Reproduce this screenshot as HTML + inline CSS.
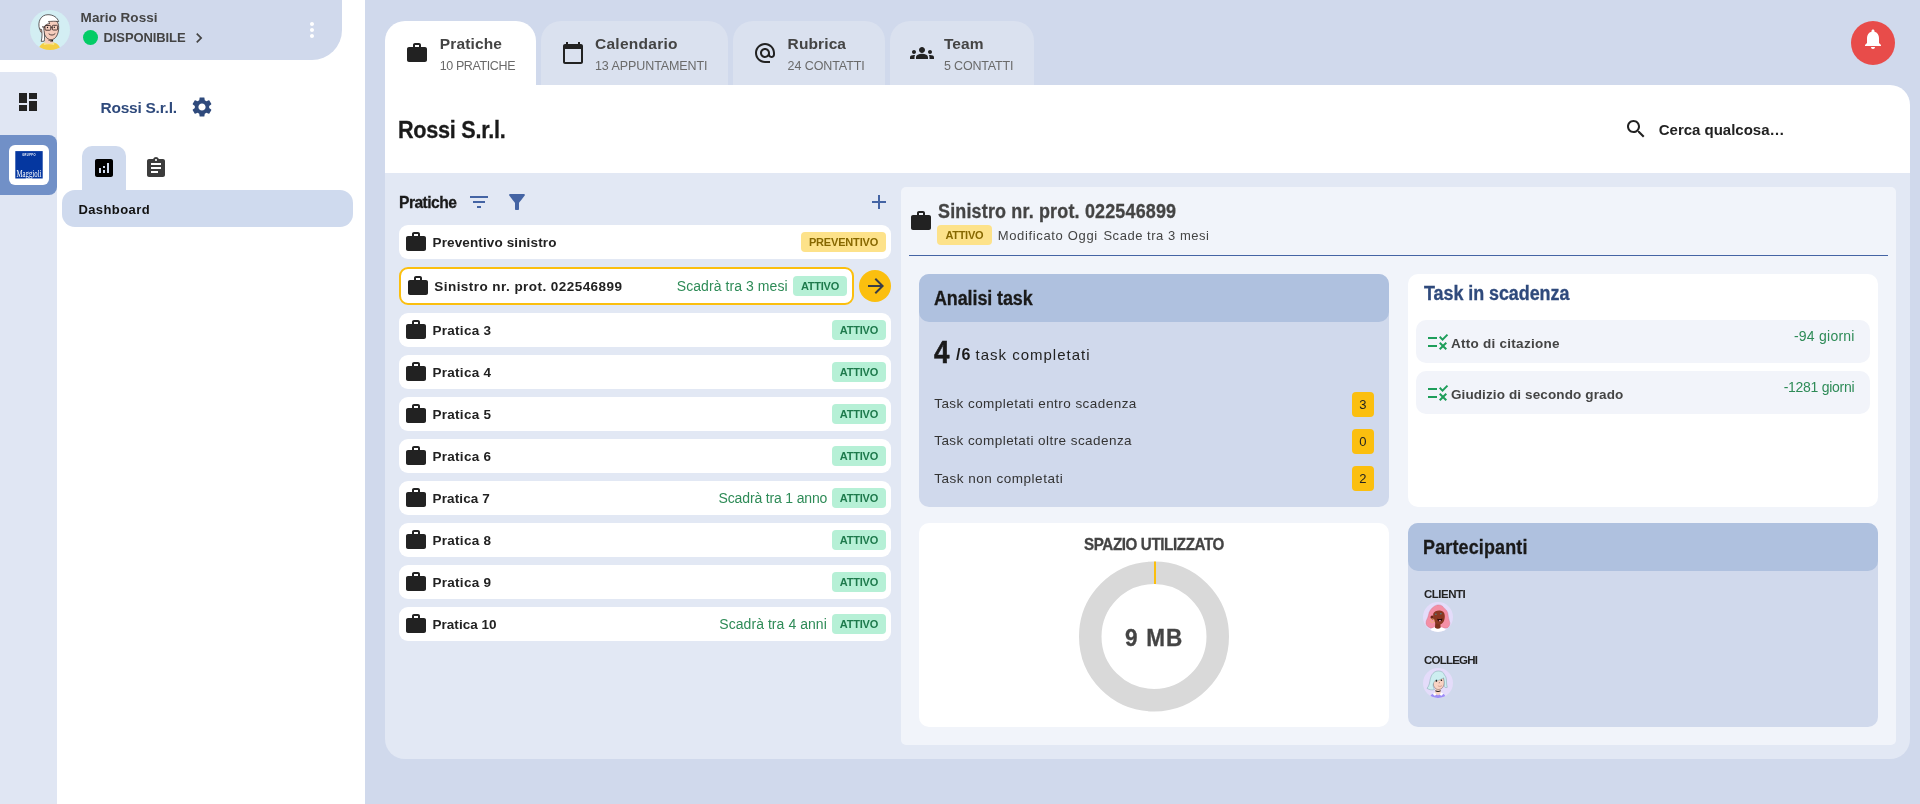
<!DOCTYPE html>
<html lang="it"><head><meta charset="utf-8"><title>Rossi S.r.l. - Pratiche</title>
<style>
html,body{margin:0;padding:0}
body{width:1920px;height:804px;overflow:hidden;background:#d0d9ec;font-family:"Liberation Sans", sans-serif;position:relative}
#app{will-change:transform;position:absolute;left:0;top:0;width:1920px;height:804px;overflow:hidden}
#app div,#app svg,#app .t{position:absolute;box-sizing:border-box}
#app .t{line-height:1;white-space:nowrap;margin:0;padding:0}
</style></head><body><div id="app">
<div style="left:0px;top:0px;width:365px;height:804px;background:#fff;border-radius:0;"></div>
<header>
<div style="left:0px;top:0px;width:342px;height:60px;background:#d0d9ec;border-radius:0 0 30px 0;"></div>
<svg style="left:30px;top:10px" width="40" height="40" viewBox="0 0 40 40"><defs><clipPath id="cm"><circle cx="20" cy="20" r="20"/></clipPath></defs><circle cx="20" cy="20" r="20" fill="#d3eef3"/><g clip-path="url(#cm)"><path d="M8.500 40c.5-4.500 4-7 6.500-7.400h8.500c3 .4 6.500 2.900 7 7.400z" fill="#f4cf45"/><path d="M13.500 33.200c3.500-1.200 7.500-1.200 11 0l-.5 1.800c-3.300-.9-6.700-.9-10 0z" fill="#f8e58a"/><path d="M15.200 27.500h7.600l.4 5.500c-2.800 1-5.600 1-8.400 0z" fill="#f6cdbd"/><path d="M17.500 29.800c2 1 4 .8 5.500-.3l.1 1.900c-1.900.4-3.800-.1-5.600-1.600z" fill="#1a1a1a"/><path d="M13.200 17c0-5 3.300-8 7.800-8s7.700 3 7.700 8.500c0 6.500-3 12.200-7.700 12.200S13.200 24 13.200 17z" fill="#f6cdbd" stroke="#2a2020" stroke-width=".7"/><ellipse cx="11.800" cy="20" rx="1.700" ry="2.300" fill="#f6cdbd" stroke="#2a2020" stroke-width=".6"/><path d="M11.200 31.400C12.300 27 12.200 23 11.600 19.500C10.500 19 9.600 19.300 9.600 19.300C7.200 11.500 11 4.700 18 4.700C23.500 4.700 27.500 7.700 28.700 11.700C25.200 10.800 21.400 11.500 18.500 11.500C18.800 12.300 19.300 13 20 13.500C17.500 13.800 15.200 14.800 14 17C13.600 19 14.200 21.500 14.400 24C14.600 27 14.600 29.500 14.200 31.200Z" fill="#fff" stroke="#2a2020" stroke-width=".7" stroke-linejoin="round"/><rect x="15" y="15.500" width="5.800" height="4.700" rx="1" fill="none" stroke="#3a2a2a" stroke-width=".9"/><rect x="22.300" y="15.300" width="5.300" height="4.700" rx="1" fill="none" stroke="#3a2a2a" stroke-width=".9"/><path d="M20.800 17.300h1.500M15 17.200l-3-.4" stroke="#3a2a2a" stroke-width=".9"/><circle cx="17.500" cy="17.500" r=".7" fill="#1a1a1a"/><circle cx="24.300" cy="17.300" r=".7" fill="#1a1a1a"/><path d="M19 24c1.800 1.600 4.400 1.500 6-.2" fill="none" stroke="#2a2020" stroke-width=".8" stroke-linecap="round"/></g></svg>
<span id="t0" class="t" style="left:80.6px;top:11.01px;font-size:13.5px;font-weight:700;color:#444;letter-spacing:0.037px;">Mario Rossi</span>
<div style="left:82.5px;top:29.5px;width:15.0px;height:15.0px;background:#03cc66;border-radius:50%;"></div>
<span id="t1" class="t" style="left:103.5px;top:30.90px;font-size:13px;font-weight:700;color:#444;letter-spacing:-0.098px;">DISPONIBILE</span>
<svg style="left:188.5px;top:28.0px;" width="20" height="20" viewBox="0 0 24 24"><path fill="#444" d="M10 6L8.59 7.41 13.17 12l-4.58 4.59L10 18l6-6z"/></svg>
<svg style="left:300.0px;top:18.0px;" width="24" height="24" viewBox="0 0 24 24"><path fill="#fff" d="M12 8c1.1 0 2-.9 2-2s-.9-2-2-2-2 .9-2 2 .9 2 2 2zm0 2c-1.1 0-2 .9-2 2s.9 2 2 2 2-.9 2-2-.9-2-2-2zm0 6c-1.1 0-2 .9-2 2s.9 2 2 2 2-.9 2-2-.9-2-2-2z"/></svg>
</header>
<nav>
<div style="left:0px;top:72px;width:57px;height:732px;background:#e0e6f3;border-radius:0 8px 0 0;"></div>
<svg style="left:16.0px;top:90.0px;" width="24" height="24" viewBox="0 0 24 24"><path fill="#222" d="M3 13h8V3H3v10zm0 8h8v-6H3v6zm10 0h8V11h-8v10zm0-18v6h8V3h-8z"/></svg>
<div style="left:0px;top:135px;width:57px;height:60px;background:#7190c7;border-radius:0 8px 8px 0;"></div>
<div style="left:9px;top:145px;width:40px;height:40px;background:#fff;border-radius:6px;"></div>
<svg style="left:15px;top:150.500px" width="28" height="28" viewBox="0 0 28 28"><rect x=".3" y=".1" width="27.400" height="27.400" fill="#0537a0"/><text x="14" y="4.600" font-size="2.600" font-weight="700" fill="#fff" text-anchor="middle" font-family="Liberation Sans, sans-serif" letter-spacing=".4">GRUPPO</text><text x="14" y="26.300" font-size="9.500" fill="#fff" text-anchor="middle" font-family="Liberation Serif, serif" textLength="25" lengthAdjust="spacingAndGlyphs">Maggioli</text></svg>
</nav>
<aside>
<span id="t2" class="t" style="left:100.6px;top:100.00px;font-size:15.5px;font-weight:700;color:#2f4a7c;letter-spacing:-0.261px;">Rossi S.r.l.</span>
<svg style="left:190.0px;top:95.0px;" width="24" height="24" viewBox="0 0 24 24"><path fill="#2f4a7c" d="M19.14 12.94c.04-.3.06-.61.06-.94 0-.32-.02-.64-.07-.94l2.03-1.58c.18-.14.23-.41.12-.61l-1.92-3.32c-.12-.22-.37-.29-.59-.22l-2.39.96c-.5-.38-1.03-.7-1.62-.94l-.36-2.54c-.04-.24-.24-.41-.48-.41h-3.84c-.24 0-.43.17-.47.41l-.36 2.54c-.59.24-1.13.57-1.62.94l-2.39-.96c-.22-.08-.47 0-.59.22L2.74 8.87c-.12.21-.08.47.12.61l2.03 1.58c-.05.3-.09.63-.09.94s.02.64.07.94l-2.03 1.58c-.18.14-.23.41-.12.61l1.92 3.32c.12.22.37.29.59.22l2.39-.96c.5.38 1.03.7 1.62.94l.36 2.54c.05.24.24.41.48.41h3.84c.24 0 .44-.17.47-.41l.36-2.54c.59-.24 1.13-.56 1.62-.94l2.39.96c.22.08.47 0 .59-.22l1.92-3.32c.12-.22.07-.47-.12-.61l-2.01-1.58zM12 15.6c-1.98 0-3.6-1.62-3.6-3.6s1.62-3.6 3.6-3.6 3.6 1.62 3.6 3.6-1.62 3.6-3.6 3.6z"/></svg>
<div style="left:82px;top:146px;width:44px;height:46px;background:#cfdaee;border-radius:10px 10px 0 0;"></div>
<div style="left:62px;top:190px;width:291px;height:37px;background:#cfdaee;border-radius:13px;"></div>
<svg style="left:92.0px;top:156.0px;" width="24" height="24" viewBox="0 0 24 24"><path fill="#000" d="M19 3H5c-1.1 0-2 .9-2 2v14c0 1.1.9 2 2 2h14c1.1 0 2-.9 2-2V5c0-1.1-.9-2-2-2zM9 17H7v-5h2v5zm4 0h-2v-3h2v3zm0-5h-2v-2h2v2zm4 5h-2V7h2v10z"/></svg>
<svg style="left:144.0px;top:156.0px;" width="24" height="24" viewBox="0 0 24 24"><path fill="#3c3c3c" d="M19 3h-4.18C14.4 1.84 13.3 1 12 1c-1.3 0-2.4.84-2.82 2H5c-1.1 0-2 .9-2 2v14c0 1.1.9 2 2 2h14c1.1 0 2-.9 2-2V5c0-1.1-.9-2-2-2zm-7 0c.55 0 1 .45 1 1s-.45 1-1 1-1-.45-1-1 .45-1 1-1zm2 14H7v-2h7v2zm3-4H7v-2h10v2zm0-4H7V7h10v2z"/></svg>
<span id="t3" class="t" style="left:78.4px;top:203.00px;font-size:13px;font-weight:700;color:#111;letter-spacing:0.412px;">Dashboard</span>
</aside>
<main>
<div style="left:385px;top:21px;width:151px;height:65px;background:#fff;border-radius:20px 20px 0 0;"></div>
<svg style="left:405.0px;top:41.0px;" width="24" height="24" viewBox="0 0 24 24"><path fill="#222" d="M20 6h-4V4c0-1.11-.89-2-2-2h-4c-1.11 0-2 .89-2 2v2H4c-1.11 0-1.99.89-1.99 2L2 19c0 1.11.89 2 2 2h16c1.11 0 2-.89 2-2V8c0-1.11-.89-2-2-2zm-6 0h-4V4h4v2z"/></svg>
<span id="t4" class="t" style="left:439.7px;top:36.00px;font-size:15.5px;font-weight:700;color:#444;letter-spacing:0.161px;">Pratiche</span>
<span id="t5" class="t" style="left:439.7px;top:60.21px;font-size:12.5px;font-weight:400;color:#6a6a6a;letter-spacing:-0.386px;">10 PRATICHE</span>
<div style="left:541px;top:21px;width:187px;height:65px;background:#dae1ef;border-radius:20px 20px 0 0;"></div>
<svg style="left:561.0px;top:41.0px;" width="24" height="24" viewBox="0 0 24 24"><path fill="#222" d="M20 3h-1V1h-2v2H7V1H5v2H4c-1.1 0-2 .9-2 2v16c0 1.1.9 2 2 2h16c1.1 0 2-.9 2-2V5c0-1.1-.9-2-2-2zm0 18H4V8h16v13z"/></svg>
<span id="t6" class="t" style="left:595px;top:36.00px;font-size:15.5px;font-weight:700;color:#444;letter-spacing:0.266px;">Calendario</span>
<span id="t7" class="t" style="left:595px;top:60.21px;font-size:12.5px;font-weight:400;color:#6a6a6a;letter-spacing:-0.078px;">13 APPUNTAMENTI</span>
<div style="left:733px;top:21px;width:152px;height:65px;background:#dae1ef;border-radius:20px 20px 0 0;"></div>
<svg style="left:753.0px;top:41.0px;" width="24" height="24" viewBox="0 0 24 24"><path fill="#222" d="M12 2C6.48 2 2 6.48 2 12s4.48 10 10 10h5v-2h-5c-4.34 0-8-3.66-8-8s3.66-8 8-8 8 3.66 8 8v1.43c0 .79-.71 1.57-1.5 1.57s-1.5-.78-1.5-1.57V12c0-2.76-2.24-5-5-5s-5 2.24-5 5 2.24 5 5 5c1.38 0 2.64-.56 3.54-1.47.65.89 1.77 1.47 2.96 1.47 1.97 0 3.5-1.6 3.5-3.57V12c0-5.52-4.48-10-10-10zm0 13c-1.66 0-3-1.34-3-3s1.34-3 3-3 3 1.34 3 3-1.34 3-3 3z"/></svg>
<span id="t8" class="t" style="left:787.6px;top:36.00px;font-size:15.5px;font-weight:700;color:#444;letter-spacing:0.114px;">Rubrica</span>
<span id="t9" class="t" style="left:787.6px;top:60.21px;font-size:12.5px;font-weight:400;color:#6a6a6a;letter-spacing:-0.092px;">24 CONTATTI</span>
<div style="left:890px;top:21px;width:144px;height:65px;background:#dae1ef;border-radius:20px 20px 0 0;"></div>
<svg style="left:910.0px;top:41.0px;" width="24" height="24" viewBox="0 0 24 24"><path fill="#222" d="M12 12.75c1.63 0 3.07.39 4.24.9 1.08.48 1.76 1.56 1.76 2.73V18H6v-1.61c0-1.18.68-2.26 1.76-2.73 1.17-.52 2.61-.91 4.24-.91zM4 13c1.1 0 2-.9 2-2s-.9-2-2-2-2 .9-2 2 .9 2 2 2zm1.13 1.1c-.37-.06-.74-.1-1.13-.1-.99 0-1.93.21-2.78.58C.48 14.9 0 15.62 0 16.43V18h4.5v-1.61c0-.83.23-1.61.63-2.29zM20 13c1.1 0 2-.9 2-2s-.9-2-2-2-2 .9-2 2 .9 2 2 2zm4 3.43c0-.81-.48-1.53-1.22-1.85-.85-.37-1.79-.58-2.78-.58-.39 0-.76.04-1.13.1.4.68.63 1.46.63 2.29V18H24v-1.57zM12 6c1.66 0 3 1.34 3 3s-1.34 3-3 3-3-1.34-3-3 1.34-3 3-3z"/></svg>
<span id="t10" class="t" style="left:944px;top:36.00px;font-size:15.5px;font-weight:700;color:#444;letter-spacing:0.052px;">Team</span>
<span id="t11" class="t" style="left:944px;top:60.21px;font-size:12.5px;font-weight:400;color:#6a6a6a;letter-spacing:-0.186px;">5 CONTATTI</span>
<div style="left:1851px;top:21px;width:44px;height:44px;background:#e84c4a;border-radius:50%;"></div>
<svg style="left:1861.0px;top:26.5px;" width="24" height="24" viewBox="0 0 24 24"><path fill="#fff" d="M12 22c1.1 0 2-.9 2-2h-4c0 1.1.89 2 2 2zm6-6v-5c0-3.07-1.64-5.64-4.5-6.32V4c0-.83-.67-1.5-1.5-1.5s-1.5.67-1.5 1.5v.68C7.63 5.36 6 7.92 6 11v5l-2 2v1h16v-1l-2-2z"/></svg>
<div style="left:385px;top:85px;width:1525px;height:88px;background:#fff;border-radius:0 20px 0 0;"></div>
<h1 id="t12" class="t" style="left:398.3px;top:118.80px;font-size:23.5px;font-weight:700;color:#1a1a1a;transform:scaleX(0.92);transform-origin:0 0;-webkit-text-stroke:0.3px #1a1a1a;letter-spacing:-0.282px;">Rossi S.r.l.</h1>
<svg style="left:1624.0px;top:117.0px;" width="24" height="24" viewBox="0 0 24 24"><path fill="#222" d="M15.5 14h-.79l-.28-.27C15.41 12.59 16 11.11 16 9.5 16 5.91 13.09 3 9.5 3S3 5.91 3 9.5 5.91 16 9.5 16c1.61 0 3.09-.59 4.23-1.57l.27.28v.79l5 4.99L20.49 19l-4.99-5zm-6 0C7.01 14 5 11.99 5 9.5S7.01 5 9.5 5 14 7.01 14 9.5 11.99 14 9.5 14z"/></svg>
<span id="t13" class="t" style="left:1658.8px;top:122.01px;font-size:15px;font-weight:700;color:#222;letter-spacing:-0.014px;">Cerca qualcosa…</span>
<div style="left:385px;top:173px;width:1525px;height:586px;background:#e2e8f4;border-radius:0 0 20px 20px;"></div>
<h2 id="t14" class="t" style="left:398.5px;top:194.00px;font-size:17px;font-weight:700;color:#1a1a1a;transform:scaleX(0.92);transform-origin:0 0;-webkit-text-stroke:0.3px #1a1a1a;letter-spacing:-0.594px;">Pratiche</h2>
<svg style="left:467.0px;top:190.0px;" width="24" height="24" viewBox="0 0 24 24"><path fill="#4464a4" d="M10 18h4v-2h-4v2zM3 6v2h18V6H3zm3 7h12v-2H6v2z"/></svg>
<svg style="left:505.0px;top:190.0px;" width="24" height="24" viewBox="0 0 24 24"><path fill="#4464a4" d="M4.25 5.61C6.27 8.2 10 13 10 13v6c0 .55.45 1 1 1h2c.55 0 1-.45 1-1v-6s3.72-4.8 5.74-7.39c.51-.66.04-1.61-.79-1.61H5.04c-.83 0-1.3.95-.79 1.61z"/></svg>
<svg style="left:867.0px;top:190.0px;" width="24" height="24" viewBox="0 0 24 24"><path fill="#4464a4" d="M19 13h-6v6h-2v-6H5v-2h6V5h2v6h6v2z"/></svg>
<div style="left:399px;top:225px;width:492px;height:34px;background:#fff;border-radius:9px;"></div>
<svg style="left:404.0px;top:229.5px;" width="24" height="24" viewBox="0 0 24 24"><path fill="#222" d="M20 6h-4V4c0-1.11-.89-2-2-2h-4c-1.11 0-2 .89-2 2v2H4c-1.11 0-1.99.89-1.99 2L2 19c0 1.11.89 2 2 2h16c1.11 0 2-.89 2-2V8c0-1.11-.89-2-2-2zm-6 0h-4V4h4v2z"/></svg>
<span id="t15" class="t" style="left:432.5px;top:236.21px;font-size:13.5px;font-weight:700;color:#222;letter-spacing:0.131px;">Preventivo sinistro</span>
<div style="left:801px;top:232px;width:85px;height:20px;background:#fde28a;border-radius:4px;"></div>
<span id="t16" class="t" style="left:808.9px;top:237.00px;font-size:11px;font-weight:700;color:#876800;letter-spacing:-0.167px;">PREVENTIVO</span>
<div style="left:399px;top:267px;width:455px;height:38px;background:#fff;border-radius:9px;border:2px solid #fbbf0f;"></div>
<svg style="left:406.0px;top:273.5px;" width="24" height="24" viewBox="0 0 24 24"><path fill="#222" d="M20 6h-4V4c0-1.11-.89-2-2-2h-4c-1.11 0-2 .89-2 2v2H4c-1.11 0-1.99.89-1.99 2L2 19c0 1.11.89 2 2 2h16c1.11 0 2-.89 2-2V8c0-1.11-.89-2-2-2zm-6 0h-4V4h4v2z"/></svg>
<span id="t17" class="t" style="left:434.3px;top:280.21px;font-size:13.5px;font-weight:700;color:#222;letter-spacing:0.448px;">Sinistro nr. prot. 022546899</span>
<span id="t18" class="t" style="left:676.8px;top:278.81px;font-size:14px;font-weight:400;color:#2e8b57;letter-spacing:0.068px;">Scadrà tra 3 mesi</span>
<div style="left:793px;top:276px;width:54px;height:20px;background:#b6f0d6;border-radius:4px;"></div>
<span id="t19" class="t" style="left:800.9px;top:281.00px;font-size:11px;font-weight:700;color:#1e7a4c;letter-spacing:-0.223px;">ATTIVO</span>
<div style="left:859px;top:270px;width:32px;height:32px;background:#fbbf0f;border-radius:50%;"></div>
<svg style="left:864.0px;top:274.0px;" width="24" height="24" viewBox="0 0 24 24"><path fill="#383c46" d="M12 4l-1.41 1.41L16.17 11H4v2h12.17l-5.58 5.59L12 20l8-8z"/></svg>
<div style="left:399px;top:313px;width:492px;height:34px;background:#fff;border-radius:9px;"></div>
<svg style="left:404.0px;top:317.5px;" width="24" height="24" viewBox="0 0 24 24"><path fill="#222" d="M20 6h-4V4c0-1.11-.89-2-2-2h-4c-1.11 0-2 .89-2 2v2H4c-1.11 0-1.99.89-1.99 2L2 19c0 1.11.89 2 2 2h16c1.11 0 2-.89 2-2V8c0-1.11-.89-2-2-2zm-6 0h-4V4h4v2z"/></svg>
<span id="t20" class="t" style="left:432.5px;top:324.21px;font-size:13.5px;font-weight:700;color:#222;letter-spacing:0.275px;">Pratica 3</span>
<div style="left:832px;top:320px;width:54px;height:20px;background:#b6f0d6;border-radius:4px;"></div>
<span id="t21" class="t" style="left:839.7px;top:325.00px;font-size:11px;font-weight:700;color:#1e7a4c;letter-spacing:-0.183px;">ATTIVO</span>
<div style="left:399px;top:355px;width:492px;height:34px;background:#fff;border-radius:9px;"></div>
<svg style="left:404.0px;top:359.5px;" width="24" height="24" viewBox="0 0 24 24"><path fill="#222" d="M20 6h-4V4c0-1.11-.89-2-2-2h-4c-1.11 0-2 .89-2 2v2H4c-1.11 0-1.99.89-1.99 2L2 19c0 1.11.89 2 2 2h16c1.11 0 2-.89 2-2V8c0-1.11-.89-2-2-2zm-6 0h-4V4h4v2z"/></svg>
<span id="t22" class="t" style="left:432.5px;top:366.21px;font-size:13.5px;font-weight:700;color:#222;letter-spacing:0.275px;">Pratica 4</span>
<div style="left:832px;top:362px;width:54px;height:20px;background:#b6f0d6;border-radius:4px;"></div>
<span id="t23" class="t" style="left:839.7px;top:367.00px;font-size:11px;font-weight:700;color:#1e7a4c;letter-spacing:-0.183px;">ATTIVO</span>
<div style="left:399px;top:397px;width:492px;height:34px;background:#fff;border-radius:9px;"></div>
<svg style="left:404.0px;top:401.5px;" width="24" height="24" viewBox="0 0 24 24"><path fill="#222" d="M20 6h-4V4c0-1.11-.89-2-2-2h-4c-1.11 0-2 .89-2 2v2H4c-1.11 0-1.99.89-1.99 2L2 19c0 1.11.89 2 2 2h16c1.11 0 2-.89 2-2V8c0-1.11-.89-2-2-2zm-6 0h-4V4h4v2z"/></svg>
<span id="t24" class="t" style="left:432.5px;top:408.21px;font-size:13.5px;font-weight:700;color:#222;letter-spacing:0.275px;">Pratica 5</span>
<div style="left:832px;top:404px;width:54px;height:20px;background:#b6f0d6;border-radius:4px;"></div>
<span id="t25" class="t" style="left:839.7px;top:409.00px;font-size:11px;font-weight:700;color:#1e7a4c;letter-spacing:-0.183px;">ATTIVO</span>
<div style="left:399px;top:439px;width:492px;height:34px;background:#fff;border-radius:9px;"></div>
<svg style="left:404.0px;top:443.5px;" width="24" height="24" viewBox="0 0 24 24"><path fill="#222" d="M20 6h-4V4c0-1.11-.89-2-2-2h-4c-1.11 0-2 .89-2 2v2H4c-1.11 0-1.99.89-1.99 2L2 19c0 1.11.89 2 2 2h16c1.11 0 2-.89 2-2V8c0-1.11-.89-2-2-2zm-6 0h-4V4h4v2z"/></svg>
<span id="t26" class="t" style="left:432.5px;top:450.21px;font-size:13.5px;font-weight:700;color:#222;letter-spacing:0.275px;">Pratica 6</span>
<div style="left:832px;top:446px;width:54px;height:20px;background:#b6f0d6;border-radius:4px;"></div>
<span id="t27" class="t" style="left:839.7px;top:451.00px;font-size:11px;font-weight:700;color:#1e7a4c;letter-spacing:-0.183px;">ATTIVO</span>
<div style="left:399px;top:481px;width:492px;height:34px;background:#fff;border-radius:9px;"></div>
<svg style="left:404.0px;top:485.5px;" width="24" height="24" viewBox="0 0 24 24"><path fill="#222" d="M20 6h-4V4c0-1.11-.89-2-2-2h-4c-1.11 0-2 .89-2 2v2H4c-1.11 0-1.99.89-1.99 2L2 19c0 1.11.89 2 2 2h16c1.11 0 2-.89 2-2V8c0-1.11-.89-2-2-2zm-6 0h-4V4h4v2z"/></svg>
<span id="t28" class="t" style="left:432.5px;top:492.21px;font-size:13.5px;font-weight:700;color:#222;letter-spacing:0.125px;">Pratica 7</span>
<span id="t29" class="t" style="left:718.6px;top:490.81px;font-size:14px;font-weight:400;color:#2e8b57;letter-spacing:-0.156px;">Scadrà tra 1 anno</span>
<div style="left:832px;top:488px;width:54px;height:20px;background:#b6f0d6;border-radius:4px;"></div>
<span id="t30" class="t" style="left:839.7px;top:493.00px;font-size:11px;font-weight:700;color:#1e7a4c;letter-spacing:-0.183px;">ATTIVO</span>
<div style="left:399px;top:523px;width:492px;height:34px;background:#fff;border-radius:9px;"></div>
<svg style="left:404.0px;top:527.5px;" width="24" height="24" viewBox="0 0 24 24"><path fill="#222" d="M20 6h-4V4c0-1.11-.89-2-2-2h-4c-1.11 0-2 .89-2 2v2H4c-1.11 0-1.99.89-1.99 2L2 19c0 1.11.89 2 2 2h16c1.11 0 2-.89 2-2V8c0-1.11-.89-2-2-2zm-6 0h-4V4h4v2z"/></svg>
<span id="t31" class="t" style="left:432.5px;top:534.21px;font-size:13.5px;font-weight:700;color:#222;letter-spacing:0.275px;">Pratica 8</span>
<div style="left:832px;top:530px;width:54px;height:20px;background:#b6f0d6;border-radius:4px;"></div>
<span id="t32" class="t" style="left:839.7px;top:535.00px;font-size:11px;font-weight:700;color:#1e7a4c;letter-spacing:-0.183px;">ATTIVO</span>
<div style="left:399px;top:565px;width:492px;height:34px;background:#fff;border-radius:9px;"></div>
<svg style="left:404.0px;top:569.5px;" width="24" height="24" viewBox="0 0 24 24"><path fill="#222" d="M20 6h-4V4c0-1.11-.89-2-2-2h-4c-1.11 0-2 .89-2 2v2H4c-1.11 0-1.99.89-1.99 2L2 19c0 1.11.89 2 2 2h16c1.11 0 2-.89 2-2V8c0-1.11-.89-2-2-2zm-6 0h-4V4h4v2z"/></svg>
<span id="t33" class="t" style="left:432.5px;top:576.21px;font-size:13.5px;font-weight:700;color:#222;letter-spacing:0.275px;">Pratica 9</span>
<div style="left:832px;top:572px;width:54px;height:20px;background:#b6f0d6;border-radius:4px;"></div>
<span id="t34" class="t" style="left:839.7px;top:577.00px;font-size:11px;font-weight:700;color:#1e7a4c;letter-spacing:-0.183px;">ATTIVO</span>
<div style="left:399px;top:607px;width:492px;height:34px;background:#fff;border-radius:9px;"></div>
<svg style="left:404.0px;top:611.5px;" width="24" height="24" viewBox="0 0 24 24"><path fill="#222" d="M20 6h-4V4c0-1.11-.89-2-2-2h-4c-1.11 0-2 .89-2 2v2H4c-1.11 0-1.99.89-1.99 2L2 19c0 1.11.89 2 2 2h16c1.11 0 2-.89 2-2V8c0-1.11-.89-2-2-2zm-6 0h-4V4h4v2z"/></svg>
<span id="t35" class="t" style="left:432.5px;top:618.21px;font-size:13.5px;font-weight:700;color:#222;letter-spacing:0.034px;">Pratica 10</span>
<span id="t36" class="t" style="left:719.3px;top:616.81px;font-size:14px;font-weight:400;color:#2e8b57;letter-spacing:0.055px;">Scadrà tra 4 anni</span>
<div style="left:832px;top:614px;width:54px;height:20px;background:#b6f0d6;border-radius:4px;"></div>
<span id="t37" class="t" style="left:839.7px;top:619.00px;font-size:11px;font-weight:700;color:#1e7a4c;letter-spacing:-0.183px;">ATTIVO</span>
<div style="left:901px;top:187px;width:995px;height:558px;background:#f1f4fa;border-radius:5px;"></div>
<svg style="left:909.0px;top:209.0px;" width="24" height="24" viewBox="0 0 24 24"><path fill="#222" d="M20 6h-4V4c0-1.11-.89-2-2-2h-4c-1.11 0-2 .89-2 2v2H4c-1.11 0-1.99.89-1.99 2L2 19c0 1.11.89 2 2 2h16c1.11 0 2-.89 2-2V8c0-1.11-.89-2-2-2zm-6 0h-4V4h4v2z"/></svg>
<h2 id="t38" class="t" style="left:937.5px;top:201.81px;font-size:19.5px;font-weight:700;color:#444;transform:scaleX(0.92);transform-origin:0 0;-webkit-text-stroke:0.3px #444;letter-spacing:0.192px;">Sinistro nr. prot. 022546899</h2>
<div style="left:937px;top:225px;width:55px;height:20px;background:#fde28a;border-radius:4px;"></div>
<span id="t39" class="t" style="left:945.4px;top:230.00px;font-size:11px;font-weight:700;color:#876800;letter-spacing:-0.283px;">ATTIVO</span>
<span id="t40" class="t" style="left:997.7px;top:228.60px;font-size:13px;font-weight:400;color:#444;letter-spacing:0.655px;">Modificato Oggi</span>
<span id="t41" class="t" style="left:1103.4px;top:228.60px;font-size:13px;font-weight:400;color:#444;letter-spacing:0.537px;">Scade tra 3 mesi</span>
<div style="left:909px;top:255px;width:979px;height:1px;background:#4464a4;border-radius:0;"></div>
<div style="left:919px;top:274px;width:470px;height:232.5px;background:#d0d9ec;border-radius:10px;"></div>
<div style="left:919px;top:274px;width:470px;height:48px;background:#afc1df;border-radius:10px;"></div>
<h3 id="t42" class="t" style="left:934.3px;top:289.01px;font-size:19.5px;font-weight:700;color:#1a1a1a;transform:scaleX(0.92);transform-origin:0 0;-webkit-text-stroke:0.3px #1a1a1a;letter-spacing:-0.101px;">Analisi task</h3>
<span id="t43" class="t" style="left:934.4px;top:336.81px;font-size:31.5px;font-weight:700;color:#1a1a1a;transform:scaleX(0.8784);transform-origin:0 0;-webkit-text-stroke:0.6px #1a1a1a;">4</span>
<span id="t44" class="t" style="left:955.9px;top:347.31px;font-size:16px;font-weight:700;color:#1a1a1a;letter-spacing:1.056px;">/6</span>
<span id="t45" class="t" style="left:975.6px;top:347.01px;font-size:15px;font-weight:400;color:#222;letter-spacing:0.990px;">task completati</span>
<span id="t46" class="t" style="left:934.2px;top:397.12px;font-size:13.5px;font-weight:400;color:#333;letter-spacing:0.451px;">Task completati entro scadenza</span>
<div style="left:1352px;top:392px;width:22px;height:25px;background:#fbbf0f;border-radius:4px;"></div>
<span id="t47" class="t" style="left:1359.3px;top:397.80px;font-size:13px;font-weight:400;color:#222;">3</span>
<span id="t48" class="t" style="left:934.2px;top:434.01px;font-size:13.5px;font-weight:400;color:#333;letter-spacing:0.442px;">Task completati oltre scadenza</span>
<div style="left:1352px;top:429px;width:22px;height:25px;background:#fbbf0f;border-radius:4px;"></div>
<span id="t49" class="t" style="left:1359.3px;top:434.80px;font-size:13px;font-weight:400;color:#222;">0</span>
<span id="t50" class="t" style="left:934.2px;top:472.01px;font-size:13.5px;font-weight:400;color:#333;letter-spacing:0.510px;">Task non completati</span>
<div style="left:1352px;top:466px;width:22px;height:25px;background:#fbbf0f;border-radius:4px;"></div>
<span id="t51" class="t" style="left:1359.3px;top:471.80px;font-size:13px;font-weight:400;color:#222;">2</span>
<div style="left:1408px;top:274px;width:470px;height:232.5px;background:#fff;border-radius:10px;"></div>
<h3 id="t52" class="t" style="left:1424.3px;top:283.92px;font-size:19.5px;font-weight:700;color:#2f4a7c;transform:scaleX(0.92);transform-origin:0 0;-webkit-text-stroke:0.3px #2f4a7c;letter-spacing:-0.062px;">Task in scadenza</h3>
<div style="left:1416px;top:320px;width:454px;height:43px;background:#f2f4fa;border-radius:10px;"></div>
<svg style="left:1426.0px;top:330.0px;" width="24" height="24" viewBox="0 0 24 24"><path fill="#1e9e5a" d="M16.54 11L13 7.46l1.41-1.41 2.12 2.12 4.24-4.24 1.41 1.41L16.54 11zM11 7H2v2h9V7zm10 6.41L19.59 12 17 14.59 14.41 12 13 13.41 15.59 16 13 18.59 14.41 20 17 17.41 19.59 20 21 18.59 18.41 16 21 13.41zM11 15H2v2h9v-2z"/></svg>
<span id="t53" class="t" style="left:1450.9px;top:336.62px;font-size:13.5px;font-weight:700;color:#444;letter-spacing:0.272px;">Atto di citazione</span>
<span id="t54" class="t" style="left:1793.9px;top:328.90px;font-size:14px;font-weight:400;color:#2e8b57;letter-spacing:0.247px;">-94 giorni</span>
<div style="left:1416px;top:371px;width:454px;height:43px;background:#f2f4fa;border-radius:10px;"></div>
<svg style="left:1426.0px;top:381.0px;" width="24" height="24" viewBox="0 0 24 24"><path fill="#1e9e5a" d="M16.54 11L13 7.46l1.41-1.41 2.12 2.12 4.24-4.24 1.41 1.41L16.54 11zM11 7H2v2h9V7zm10 6.41L19.59 12 17 14.59 14.41 12 13 13.41 15.59 16 13 18.59 14.41 20 17 17.41 19.59 20 21 18.59 18.41 16 21 13.41zM11 15H2v2h9v-2z"/></svg>
<span id="t55" class="t" style="left:1450.9px;top:387.62px;font-size:13.5px;font-weight:700;color:#444;letter-spacing:0.120px;">Giudizio di secondo grado</span>
<span id="t56" class="t" style="left:1783.7px;top:379.90px;font-size:14px;font-weight:400;color:#2e8b57;letter-spacing:-0.285px;">-1281 giorni</span>
<div style="left:919px;top:523px;width:470px;height:204px;background:#fff;border-radius:10px;"></div>
<span id="t57" class="t" style="left:1083.9px;top:536.02px;font-size:16.5px;font-weight:700;color:#444;transform:scaleX(0.92);transform-origin:0 0;-webkit-text-stroke:0.3px #444;letter-spacing:-0.431px;">SPAZIO UTILIZZATO</span>
<svg style="left:1074px;top:556px" width="160" height="160" viewBox="0 0 160 160"><circle cx="80" cy="80.500" r="63.750" fill="none" stroke="#d9d9d9" stroke-width="22.500"/><rect x="80" y="5.500" width="2" height="22.500" fill="#fbbf0f"/></svg>
<span id="t58" class="t" style="left:1125px;top:625.81px;font-size:24.5px;font-weight:700;color:#444;transform:scaleX(0.92);transform-origin:0 0;-webkit-text-stroke:0.3px #444;letter-spacing:1.281px;">9 MB</span>
<div style="left:1408px;top:523px;width:470px;height:204px;background:#d0d9ec;border-radius:10px;"></div>
<div style="left:1408px;top:523px;width:470px;height:48px;background:#afc1df;border-radius:10px;"></div>
<h3 id="t59" class="t" style="left:1423px;top:538.31px;font-size:19.5px;font-weight:700;color:#1a1a1a;transform:scaleX(0.92);transform-origin:0 0;-webkit-text-stroke:0.3px #1a1a1a;letter-spacing:0.178px;">Partecipanti</h3>
<span id="t60" class="t" style="left:1424px;top:589.00px;font-size:11.5px;font-weight:700;color:#222;letter-spacing:-0.506px;">CLIENTI</span>
<span id="t61" class="t" style="left:1424px;top:655.20px;font-size:11.5px;font-weight:700;color:#222;letter-spacing:-0.775px;">COLLEGHI</span>
<svg style="left:1423px;top:602px" width="30" height="30" viewBox="0 0 30 30"><defs><clipPath id="c1"><circle cx="15" cy="15" r="15"/></clipPath></defs><circle cx="15" cy="15" r="15" fill="#e4dcfa"/><g clip-path="url(#c1)"><path d="M11 4.500c2.500-2 6-2.200 8.500-.3 1 .8 1.500 2 2.500 2.700 2.500 1.500 3 4.500 3.300 7.500.3 3 1.700 5.300 1.500 7.500-.2 2-1.200 3.300-2.800 4.100H7.500C5.300 25 3.200 24 3 21.500c-.3-3 2-5.500 2.500-8.500.5-3.500 2.500-6.500 5.500-8.500z" fill="#f48fa5" stroke="#c9627a" stroke-width=".3"/><path d="M6.500 30c.5-3 3-5 8.500-5s8 2 8.500 5z" fill="#fff"/><path d="M12.300 20h5l.3 5.800c-1.700 1.200-3.800 1.200-5.600 0z" fill="#7c2f1b"/><path d="M10.300 11.500c1-2.200 3.500-3.200 6.500-3 3 .2 5 2.200 5 5.500 0 4-1.500 8.300-5.500 8.500-3.500.2-5.500-3.500-5.800-7-.3-.5-.5-2.500-.2-4z" fill="#8a3720"/><path d="M7.800 14.200c.8-1 2.200-.8 2.700.2l.5 3c-1.200.5-2.700-.2-3.300-1.500-.3-.6-.3-1.200.1-1.700z" fill="#6a2415"/><circle cx="9.300" cy="18.600" r="1.900" fill="none" stroke="#f2b866" stroke-width=".7"/><path d="M14.200 16.800c1.700.4 3.500.3 5.200-.3-.1 1.800-1 3-2.600 3.100-1.600.1-2.500-1.200-2.600-2.800z" fill="#2a0a0a"/><ellipse cx="16.900" cy="18.700" rx="1.100" ry=".7" fill="#f48fa5"/><circle cx="12.900" cy="12.300" r=".75" fill="#3f8f95"/><circle cx="17.900" cy="11.800" r=".75" fill="#3f8f95"/></g></svg>
<svg style="left:1423px;top:668px" width="30" height="30" viewBox="0 0 30 30"><defs><clipPath id="c2"><circle cx="15" cy="15" r="15"/></clipPath></defs><circle cx="15" cy="15" r="15" fill="#e4dcfa"/><g clip-path="url(#c2)"><path d="M6.500 30c.6-2.800 3-4.600 6-5h5c3 .4 5 2.200 5.500 5z" fill="#9d8df7"/><path d="M9.500 25.800l3-1.600 1.200 2.600-2.200 1zM20.500 25.600l-3-1.400-1.200 2.600 2.400 1z" fill="#fff"/><path d="M12.500 20.500h5l.3 4.700-2.800 2.300-2.800-2.300z" fill="#f9d3c3"/><path d="M12.400 22.300c1.800.9 3.600.9 5.300 0v1c-1.800.8-3.600.8-5.300 0z" fill="#1a1a1a"/><path d="M9.500 11c1-2 3.500-3 6.500-3 3.500 0 5.300 2.500 5.300 6 0 4-2 7.300-5.500 7.500-3.300.2-5.300-2.800-5.800-6-.5-1.500-.8-3-.5-4.500z" fill="#f9d3c3" stroke="#3a2a2a" stroke-width=".35"/><ellipse cx="9" cy="15.800" rx="1.200" ry="1.600" fill="#f9d3c3" stroke="#3a2a2a" stroke-width=".3"/><path d="M4 20.300c2.500-2.500 2.500-6 3.300-9.300C8.300 6.500 11 3 15.500 3c3 0 5.300 1.500 6 4 1.800 1.500 2 4.500 2 7 0 2 .3 3.800.8 5.300-1.300.5-2.500.3-3-.8.300-3 .2-6-.8-8.700-1.500 1.300-4.800 2.200-7.800 3.700.3-1 .7-1.700 1.300-2.300-2 1-3.300 2.800-3.800 5-.3 1.800.3 3.500 1.300 5.300-2.500.8-5 .5-7.500-1.200z" fill="#cdeef0" stroke="#5d8a90" stroke-width=".35" stroke-linejoin="round"/><circle cx="13.400" cy="12.900" r=".8" fill="#111"/><circle cx="18.400" cy="12.200" r=".8" fill="#111"/><path d="M16.500 14l-.3 1.300" stroke="#3a2a2a" stroke-width=".4"/><path d="M15.200 18c1.200.7 2.500.6 3.500-.2" fill="none" stroke="#b5776a" stroke-width=".5" stroke-linecap="round"/></g></svg>
</main>
</div></body></html>
